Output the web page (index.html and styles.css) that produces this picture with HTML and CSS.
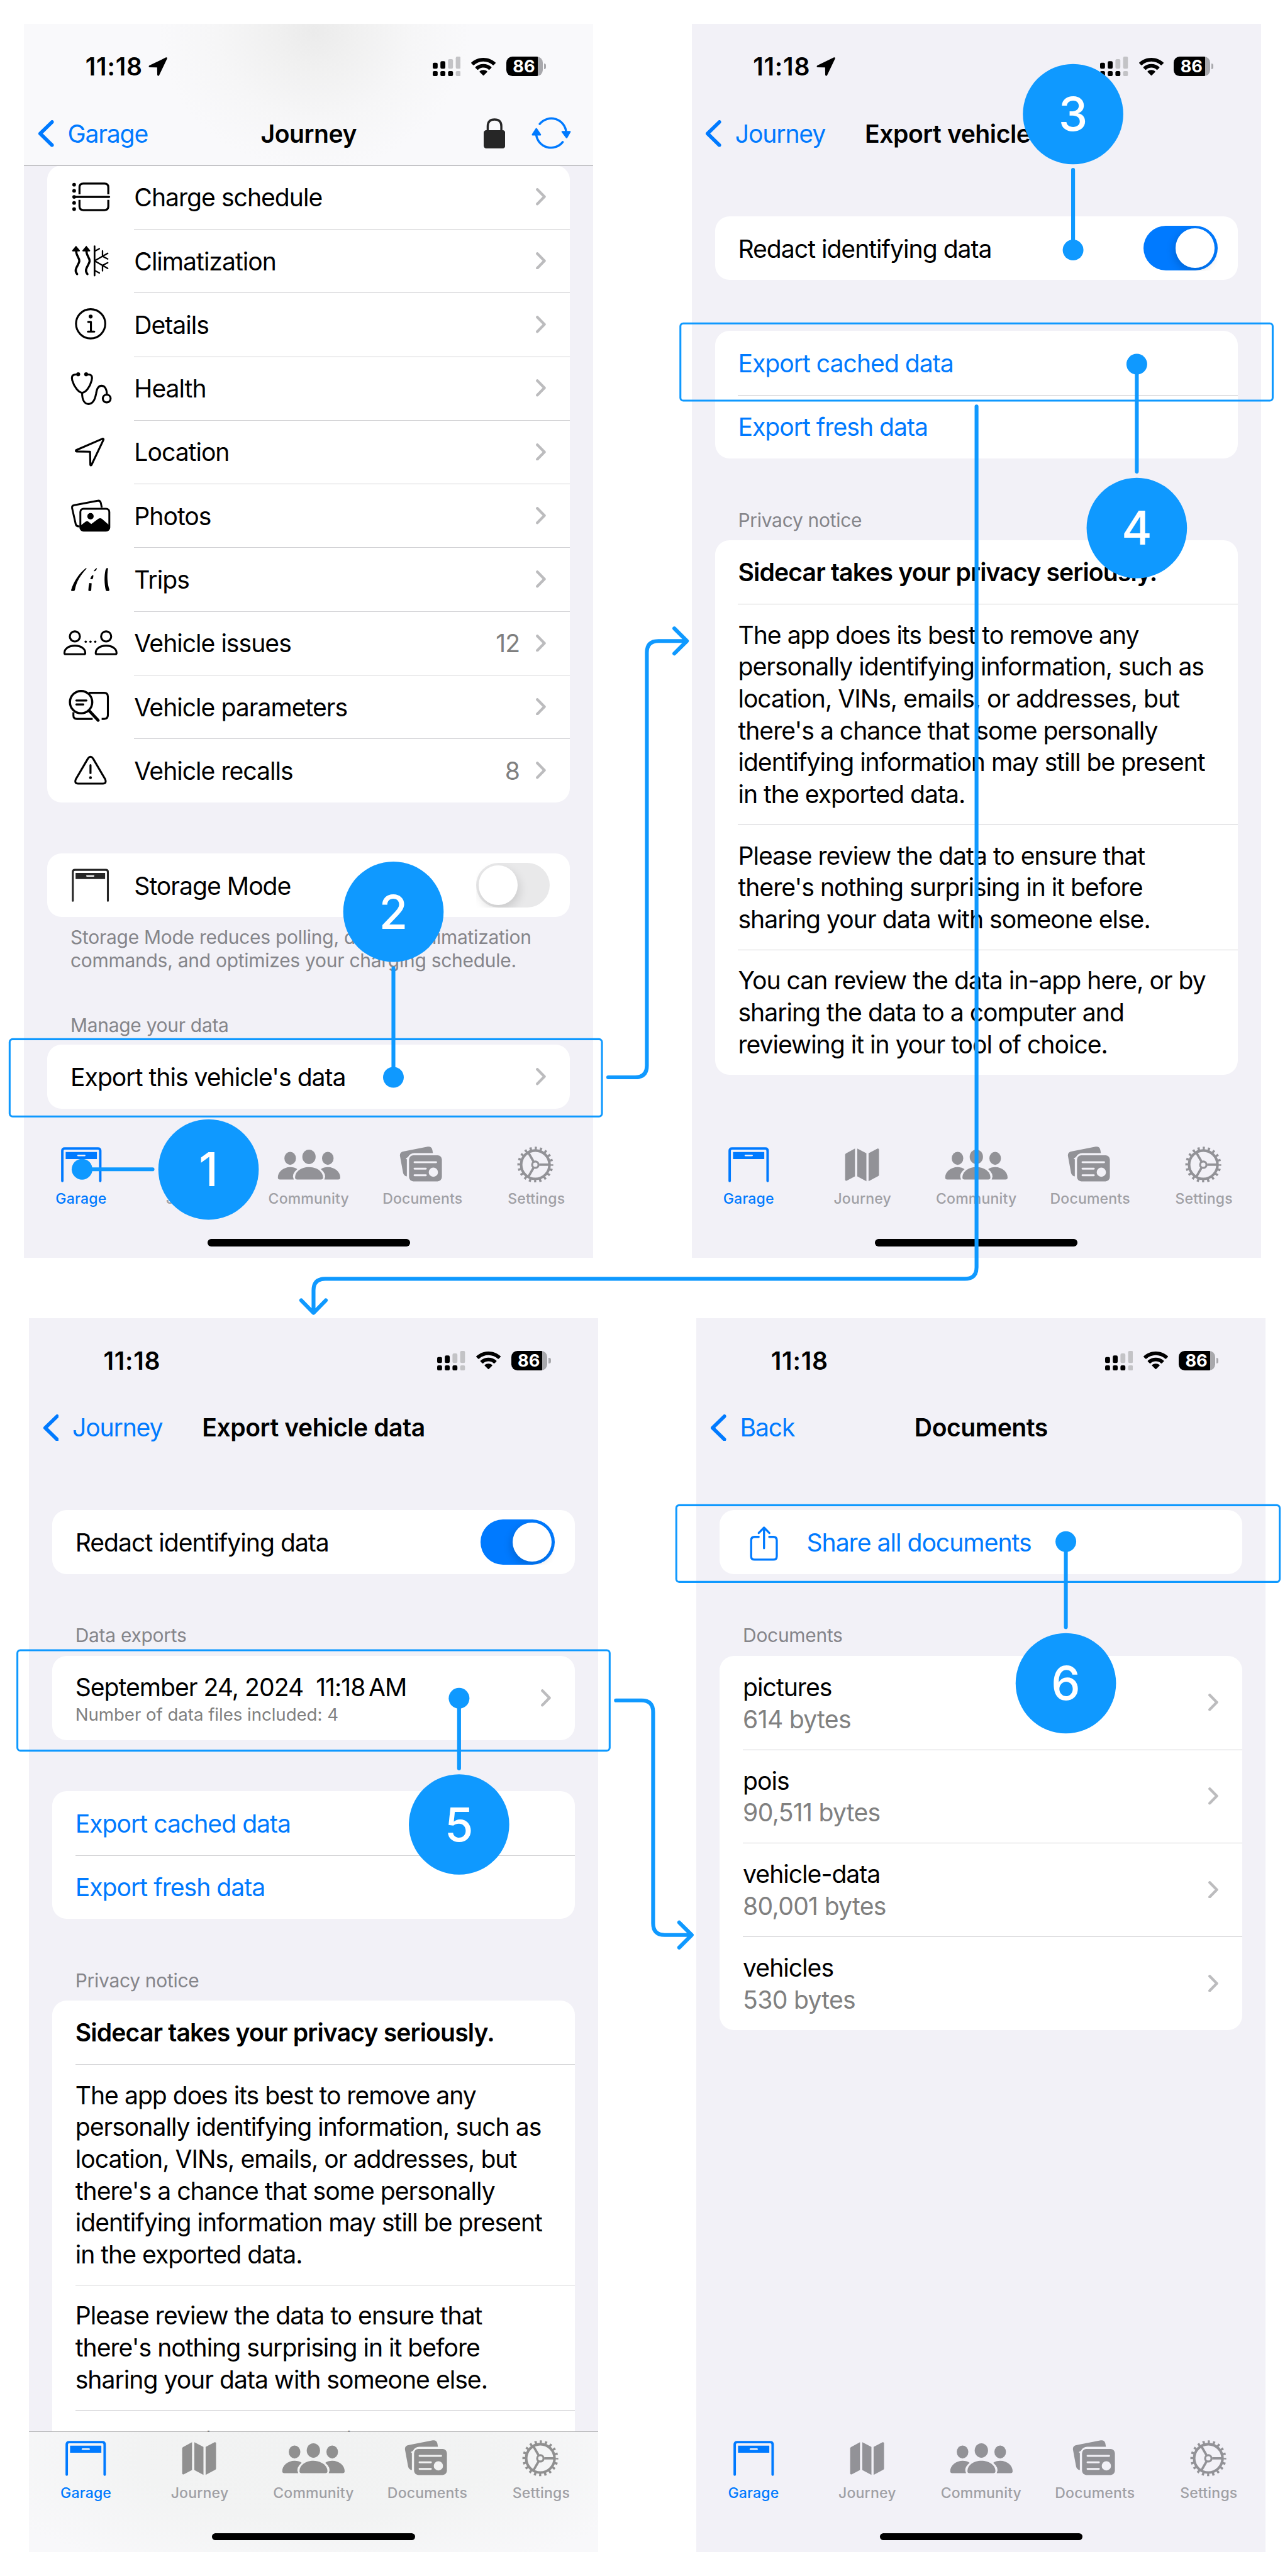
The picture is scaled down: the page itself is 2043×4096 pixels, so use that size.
FILE: index.html
```html
<!DOCTYPE html>
<html lang="en">
<head>
<meta charset="utf-8">
<title>Export vehicle data</title>
<link rel="stylesheet" href="styles.css">
</head>
<body>

<svg class="sprite" aria-hidden="true">
  <symbol id="arrow" viewBox="0 0 13 13"><path d="M12.1.15.7 5.7Q-.3 6.5.8 6.9L6 7.1 6.1 12.2Q6.5 13.4 7.4 12.5L12.9 1Q13.1-.2 12.1.15Z"/></symbol>
  <symbol id="signal" viewBox="0 0 19.4 13.6">
    <rect x="0" y="4.2" width="3.4" height="4.2" rx="1"/><rect x="5.3" y="3.2" width="3.4" height="5.2" rx="1"/>
    <rect x="0" y="10" width="3.4" height="3.5" rx="1"/><rect x="5.3" y="10" width="3.4" height="3.5" rx="1"/><rect x="10.6" y="10" width="3.4" height="3.5" rx="1"/>
    <g fill="#c3c3c6"><rect x="10.6" y="1.7" width="3.4" height="6.7" rx="1"/><rect x="15.9" y="0" width="3.4" height="8.4" rx="1"/><rect x="15.9" y="10" width="3.4" height="3.5" rx="1"/></g>
  </symbol>
  <symbol id="wifi" viewBox="0 0 17 12.4">
    <path d="M8.5 0C5.3 0 2.4 1.2.2 3.2Q-.1 3.5.2 3.8L1.4 5Q1.7 5.2 2 5C3.8 3.4 6 2.5 8.5 2.5S13.2 3.4 15 5Q15.3 5.2 15.6 5L16.8 3.8Q17.1 3.5 16.8 3.2C14.6 1.2 11.7 0 8.5 0Z"/>
    <path d="M8.5 4.2C6.400 4.200 4.500 5 3 6.300Q2.800 6.600 3 6.900L4.300 8.100Q4.600 8.300 4.900 8.100C5.900 7.200 7.100 6.700 8.500 6.700S11.100 7.200 12.100 8.100Q12.400 8.300 12.700 8.100L14 6.900Q14.200 6.600 14 6.300C12.500 5 10.600 4.200 8.500 4.200Z"/>
    <path d="M8.500 8.400C7.500 8.400 6.600 8.700 5.900 9.300Q5.700 9.600 5.900 9.800L8.200 12.100Q8.500 12.400 8.800 12.100L11.100 9.800Q11.300 9.600 11.100 9.300C10.400 8.700 9.500 8.400 8.500 8.400Z"/>
  </symbol>
  <symbol id="back" viewBox="0 0 11.200 18.600"><path d="M9.900 1.300 1.700 9.300 9.900 17.300" fill="none" stroke="currentColor" stroke-width="2.500" stroke-linecap="round" stroke-linejoin="round"/></symbol>
  <symbol id="next" viewBox="0 0 7 12"><path d="M1 1 5.900 6 1 11" fill="none" stroke="#bcbcbe" stroke-width="1.900" stroke-linecap="round" stroke-linejoin="round"/></symbol>

  <symbol id="i-charge" viewBox="0 0 44 30">
    <g fill="none" stroke="#000" stroke-width="1.400"><path d="M14.500 13V8.200Q14.500 5.600 17.100 5.600H31.800Q34.400 5.600 34.400 8.200V13M14.500 16.800V21.300Q14.500 23.900 17.100 23.900H31.800Q34.400 23.900 34.400 21.300V16.800"/><path d="M11 14.800H35" stroke-linecap="round"/></g>
    <circle cx="10.800" cy="6.400" r="1.250"/><circle cx="10.800" cy="10.600" r="1.250"/><circle cx="10.800" cy="14.800" r="1.250"/><circle cx="10.800" cy="19" r="1.250"/><circle cx="10.800" cy="23.200" r="1.250"/>
  </symbol>
  <symbol id="i-climate" viewBox="0 0 44 30">
    <g fill="none" stroke="#000" stroke-width="1.500" stroke-linecap="round">
      <path d="M12.200 8C12 11.500 14.500 12.800 14.400 15.300 14.200 18 10 20.800 12.900 24.300M19.300 8C19.100 11.500 21.600 12.800 21.500 15.300 21.300 18 17.100 20.800 20 24.300"/>
      <g stroke-width="1.200"><path d="M24.900 5V25.200"/><path d="M24.900 8.500 28.200 6.700M24.900 21.700 28.200 23.500M24.900 15.100 34 9.900M24.900 15.100 34 20.300M30.400 8.200V12L34 13.800M30.400 22V18.200L34 16.400" stroke-width="1"/></g>
    </g>
    <path d="M12.100 4.700 14.800 7.900Q14.900 8.600 14.200 8.600H10Q9.300 8.600 9.400 7.900ZM19.200 4.700 21.900 7.900Q22 8.600 21.300 8.600H17.100Q16.400 8.600 16.500 7.900Z"/>
  </symbol>
  <symbol id="i-info" viewBox="0 0 44 30">
    <g fill="none" stroke="#000" stroke-width="1.350" stroke-linecap="round" stroke-linejoin="round"><circle cx="22.200" cy="14.700" r="10.100"/><path d="M20.500 13.400H22.400V20M20.300 20.100H24.700"/></g>
    <circle cx="22.200" cy="9.700" r="1.350"/>
  </symbol>
  <symbol id="i-health" viewBox="0 0 44 30">
    <g fill="none" stroke="#000" stroke-width="1.350"><path d="M12.800 5.400H11.500C9.300 5.600 8.900 7.300 9.500 9.500 10.800 14 14 18 16.300 18 18.800 18 21.800 14 22.900 9.500 23.500 7.300 23.200 5.600 21 5.400H19.500"/><path d="M16.300 18C16.300 23 18 25.800 20.800 25.800 23.800 25.800 25.200 23 26 18.500 26.500 15 27.600 13.200 29.700 13.200 32 13.200 33.300 15.500 33.400 19"/><circle cx="33.300" cy="22" r="2.700"/></g>
    <circle cx="13.600" cy="5.300" r="1.350"/><circle cx="19.100" cy="5.300" r="1.350"/>
  </symbol>
  <symbol id="i-location" viewBox="0 0 44 30"><path d="M30.400 5.900 12.200 13.800Q11.700 14.500 12.400 14.700L21.800 14.900 22 24Q22.300 24.600 22.800 24L31.100 6.600Q31.200 5.700 30.400 5.900Z" fill="none" stroke="#000" stroke-width="1.350" stroke-linejoin="round"/></symbol>
  <symbol id="i-photos" viewBox="0 0 44 30">
    <path d="M14.600 22.500Q12.300 22.800 11.900 21L9.400 10Q9.100 8.200 10.900 7.900L27 4.900Q28.700 4.500 29.200 6.300L29.900 9.600" fill="none" stroke="#000" stroke-width="1.300"/>
    <rect x="15.100" y="10.400" width="20" height="15.100" rx="2.200" fill="#fff" stroke="#000" stroke-width="1.300"/>
    <circle cx="22.100" cy="15.600" r="2.200"/><path d="M15.200 22 18.700 19.300Q19.800 18.600 20.800 19.400L22.600 21 27.600 17.300Q28.800 16.600 30 17.400L35 21.700V23.500Q35 25.500 33 25.500H17.200Q15.200 25.500 15.200 23.500Z"/>
  </symbol>
  <symbol id="i-trips" viewBox="0 0 44 30"><path d="M18.800 7.200C14 11 10.400 16.500 8.700 22.300Q8.600 22.900 9.200 22.900H10.500Q11.100 22.900 11.300 22.300C12.300 16.500 15.200 12 19.400 7.400Q19.300 6.900 18.800 7.200ZM26 7.300Q24.900 8 24.300 9.200 25.300 9.400 25.800 8.700L26.600 7.500Q26.600 7 26 7.300ZM23.400 11.900Q22.300 12.800 21.900 14.800H23.500Q24.200 13.500 24.100 12.100ZM21.300 17.400Q20.700 19.500 20.600 22.500L21 22.900H22.200L22.600 22.500 22.900 17.600ZM33.800 7Q33 6.900 32.500 8.200C31.500 12.500 31.600 18 32.700 22.500L33.200 22.900H34.700L35.200 22.300C33.700 17.500 33.400 12.500 34.200 7.500Z"/></symbol>
  <symbol id="i-issues" viewBox="0 0 44 30">
    <g fill="none" stroke="#000" stroke-width="1.350"><circle cx="11.300" cy="10.400" r="3.500"/><circle cx="32.900" cy="10.400" r="3.500"/><path d="M4.100 21.800C4.100 18.900 7 16.800 11.300 16.800S18.500 18.900 18.500 21.800Q18.500 22.700 17.600 22.700H5Q4.100 22.700 4.100 21.800ZM25.700 21.800C25.700 18.900 28.600 16.800 32.900 16.800S40.100 18.900 40.100 21.800Q40.100 22.700 39.200 22.700H26.600Q25.700 22.700 25.700 21.800Z"/></g>
    <circle cx="18.800" cy="14" r=".8"/><circle cx="22.100" cy="14" r=".8"/><circle cx="25.400" cy="14" r=".8"/>
  </symbol>
  <symbol id="i-params" viewBox="0 0 44 30">
    <g fill="none" stroke="#000" stroke-width="1.350" stroke-linecap="round"><path d="M21 5.500H31.500Q34.100 5.500 34.100 8.100V20.900Q34.100 23.500 31.500 23.500H29.800M23.600 23.500H12.700Q10.300 23.500 10.300 21.200V18.900" stroke-linecap="butt"/><circle cx="15.600" cy="11.900" r="7.700" stroke-width="1.500"/><path d="M12.300 10.800H19.300M12.300 13.500H17.200"/><path d="M21.400 18.100 27.400 24.500" stroke-width="2"/></g>
  </symbol>
  <symbol id="i-warn" viewBox="0 0 44 30">
    <path d="M20.400 6.900 11.900 21.400Q10.800 24.200 13.500 24.300H30.700Q33.400 24.200 32.300 21.400L23.800 6.900Q22.100 4.600 20.400 6.900Z" fill="none" stroke="#000" stroke-width="1.350" stroke-linejoin="round"/>
    <path d="M22.100 11.600V17" stroke="#000" stroke-width="1.400" stroke-linecap="round"/><circle cx="22.100" cy="20.200" r=".95"/>
  </symbol>
  <symbol id="i-storage" viewBox="0 0 44 30">
    <path d="M9.900 25.700V5.800Q9.900 4.400 11.300 4.400H32.700Q34.100 4.400 34.100 5.800V25.700" fill="none" stroke="#262626" stroke-width="1.350" stroke-linecap="round"/>
    <path d="M11.800 6.500H32.200V10.800H11.800Z" fill="#262626"/><path d="M19.600 8.600H24.300" stroke="#fff" stroke-width="1" stroke-linecap="round"/>
  </symbol>
  <symbol id="i-share" viewBox="0 0 44 30"><path d="M19.200 11.200H16.400Q14 11.200 14 13.600V24.500Q14 26.900 16.400 26.900H29.300Q31.700 26.900 31.700 24.500V13.600Q31.700 11.200 29.300 11.200H26.500M22.900 19V5.200M19.200 8.500 22.900 4.800 26.600 8.500" fill="none" stroke="#007aff" stroke-width="1.450" stroke-linecap="round" stroke-linejoin="round"/></symbol>

  <symbol id="t-garage" viewBox="0 0 48 28">
    <path d="M10.900 26.800V6Q10.900 4.400 12.500 4.400H35.500Q37.100 4.400 37.100 6V26.800" fill="none" stroke="currentColor" stroke-width="1.700" stroke-linecap="round"/>
    <path d="M13.200 6.800H34.800V11.700H13.200Z" fill="currentColor"/><path d="M21.800 9.200H26.300" stroke="var(--bar)" stroke-width="1.100" stroke-linecap="round"/>
  </symbol>
  <symbol id="t-journey" viewBox="0 0 48 28"><g fill="currentColor"><path d="M12.600 7.800 18.800 4.400V23.700L13 26.700Q12 26.900 12 26V8.800Q12 8.200 12.600 7.800Z"/><path d="M20.400 4.400 26.700 7.700V27L20.400 23.700Z"/><path d="M28.200 7.700 34.400 4.500Q35.400 4.300 35.400 5.300V22.600Q35.400 23.200 34.900 23.500L28.200 27Z"/></g></symbol>
  <symbol id="t-community" viewBox="0 0 48 28"><g fill="currentColor">
    <ellipse cx="24" cy="10.200" rx="4.600" ry="5"/><path d="M14.400 24.400C14.400 20.500 18.500 17.300 24 17.300S33.700 20.500 33.700 24.400Q33.700 25.800 32.300 25.800H15.800Q14.400 25.800 14.400 24.400Z"/>
    <ellipse cx="37" cy="11.200" rx="4" ry="4.500"/><path d="M32.200 18.700Q34.200 17.300 37 17.300C42 17.300 45.600 20.800 45.600 24.400Q45.600 25.800 44.200 25.800H34.600Q36.600 22.400 32.200 18.700Z"/>
    <ellipse cx="11" cy="11.200" rx="4" ry="4.500"/><path d="M15.900 18.700Q13.900 17.300 11.100 17.300C6.100 17.300 2.500 20.800 2.500 24.400Q2.500 25.800 3.900 25.800H13.500Q11.500 22.400 15.900 18.700Z"/>
  </g></symbol>
  <symbol id="t-documents" viewBox="0 0 48 28">
    <path d="M11.300 6.400 27.800 3.200Q30.400 2.800 31 5.300L31.400 7.600H18.500Q15.500 7.700 14.200 10.300L12.600 11.300 13.400 12V23.700Q11.300 23.400 10.800 21.300L8.600 9.300Q8.400 6.900 11.300 6.400Z" fill="currentColor"/>
    <rect x="14.900" y="9.100" width="22.700" height="18" rx="3" fill="currentColor"/>
    <path d="M18.700 13.900H33.600M18.700 18.400H26.500M18.700 22.900H26.500" stroke="var(--bar)" stroke-width="1.300" stroke-linecap="round"/><circle cx="31.700" cy="20.800" r="3.200" fill="var(--bar)"/>
  </symbol>
  <symbol id="t-settings" viewBox="0 0 48 28"><g fill="none" stroke="currentColor">
    <circle cx="23.500" cy="15.600" r="9.800" stroke-width="1.800"/><circle cx="23.500" cy="15.600" r="11.400" stroke-width="2" stroke-dasharray="1.500 2.081" stroke-dashoffset=".75"/>
    <circle cx="23.500" cy="15.600" r="2.200" stroke-width="1.400"/><path d="M26.200 15.600H32.600M22.150 17.940 18.950 23.480M22.150 13.260 18.950 7.720" stroke-width="1.600"/>
  </g></symbol>
</svg>

<main class="board">
  <div class="pair">

    <section class="phone">
      <header class="top blurred">
        <div class="status">
          <div class="clock">11:18<svg class="loc"><use href="#arrow"/></svg></div>
          <div class="radios"><svg class="signal"><use href="#signal"/></svg><svg class="wifi"><use href="#wifi"/></svg><span class="battery"><b>86</b></span></div>
        </div>
        <nav class="nav">
          <a class="back"><svg><use href="#back"/></svg>Garage</a>
          <h1>Journey</h1>
          <div class="actions">
            <svg class="lock" viewBox="0 0 15 21"><path d="M2.800 9.500V5.600Q2.800.9 7.500.9T12.200 5.600V9.500" fill="none" stroke="#262626" stroke-width="1.500"/><rect x="0" y="8.300" width="14.900" height="12.500" rx="1.800" fill="#262626"/></svg>
            <svg class="sync" viewBox="0 0 28 24"><g fill="none" stroke="#007aff" stroke-width="1.500" stroke-linecap="round"><path d="M6.100 5.700A10.300 10.300 0 0 1 24.400 11.500M22 18.200A10.300 10.300 0 0 1 3.700 13"/></g><path d="M21.600 10.500H27Q27.800 10.500 27.500 11.300L25.200 15.300Q24.700 15.900 24.200 15.300L21.200 11.300Q21 10.600 21.600 10.500ZM1.200 13.700H6.600Q7.300 13.600 7 12.800L4.300 8.800Q3.800 8.200 3.300 8.800L.7 12.800Q.4 13.600 1.200 13.700Z" fill="#007aff"/></svg>
          </div>
        </nav>
      </header>
      <div class="body tucked">
        <ul class="card icons">
          <li><svg><use href="#i-charge"/></svg><span>Charge schedule</span><svg class="next"><use href="#next"/></svg></li>
          <li><svg><use href="#i-climate"/></svg><span>Climatization</span><svg class="next"><use href="#next"/></svg></li>
          <li><svg><use href="#i-info"/></svg><span>Details</span><svg class="next"><use href="#next"/></svg></li>
          <li><svg><use href="#i-health"/></svg><span>Health</span><svg class="next"><use href="#next"/></svg></li>
          <li><svg><use href="#i-location"/></svg><span>Location</span><svg class="next"><use href="#next"/></svg></li>
          <li><svg><use href="#i-photos"/></svg><span>Photos</span><svg class="next"><use href="#next"/></svg></li>
          <li><svg><use href="#i-trips"/></svg><span>Trips</span><svg class="next"><use href="#next"/></svg></li>
          <li><svg><use href="#i-issues"/></svg><span>Vehicle issues</span><em>12</em><svg class="next"><use href="#next"/></svg></li>
          <li><svg><use href="#i-params"/></svg><span>Vehicle parameters</span><svg class="next"><use href="#next"/></svg></li>
          <li><svg><use href="#i-warn"/></svg><span>Vehicle recalls</span><em>8</em><svg class="next"><use href="#next"/></svg></li>
        </ul>
        <ul class="card icons spaced">
          <li><svg><use href="#i-storage"/></svg><span>Storage Mode</span><i class="toggle"></i></li>
        </ul>
        <p class="footnote">Storage Mode reduces polling, disables climatization<br>commands, and optimizes your charging schedule.</p>
        <h2 class="after-note">Manage your data</h2>
        <ul class="card"><li><span>Export this vehicle's data</span><svg class="next"><use href="#next"/></svg></li></ul>
      </div>
      <footer class="tabs">
        <a class="on"><svg><use href="#t-garage"/></svg>Garage</a><a><svg><use href="#t-journey"/></svg>Journey</a><a><svg><use href="#t-community"/></svg>Community</a><a><svg><use href="#t-documents"/></svg>Documents</a><a><svg><use href="#t-settings"/></svg>Settings</a>
      </footer>
    </section>

    <section class="phone">
      <header class="top">
        <div class="status">
          <div class="clock">11:18<svg class="loc"><use href="#arrow"/></svg></div>
          <div class="radios"><svg class="signal"><use href="#signal"/></svg><svg class="wifi"><use href="#wifi"/></svg><span class="battery"><b>86</b></span></div>
        </div>
        <nav class="nav"><a class="back"><svg><use href="#back"/></svg>Journey</a><h1>Export vehicle data</h1></nav>
      </header>
      <div class="body">
        <ul class="card"><li><span>Redact identifying data</span><i class="toggle checked"></i></li></ul>
        <ul class="card links spaced"><li><span>Export cached data</span></li><li><span>Export fresh data</span></li></ul>
        <h2>Privacy notice</h2>
        <ul class="card prose">
          <li><strong>Sidecar takes your privacy seriously.</strong></li>
          <li>The app does its best to remove any<br>personally identifying information, such as<br>location, VINs, emails, or addresses, but<br>there's a chance that some personally<br>identifying information may still be present<br>in the exported data.</li>
          <li>Please review the data to ensure that<br>there's nothing surprising in it before<br>sharing your data with someone else.</li>
          <li>You can review the data in-app here, or by<br>sharing the data to a computer and<br>reviewing it in your tool of choice.</li>
        </ul>
      </div>
      <footer class="tabs">
        <a class="on"><svg><use href="#t-garage"/></svg>Garage</a><a><svg><use href="#t-journey"/></svg>Journey</a><a><svg><use href="#t-community"/></svg>Community</a><a><svg><use href="#t-documents"/></svg>Documents</a><a><svg><use href="#t-settings"/></svg>Settings</a>
      </footer>
    </section>
  </div>

  <div class="pair shifted">
    <section class="phone">
      <header class="top">
        <div class="status">
          <div class="clock alone">11:18</div>
          <div class="radios"><svg class="signal"><use href="#signal"/></svg><svg class="wifi"><use href="#wifi"/></svg><span class="battery"><b>86</b></span></div>
        </div>
        <nav class="nav"><a class="back"><svg><use href="#back"/></svg>Journey</a><h1>Export vehicle data</h1></nav>
      </header>
      <div class="body">
        <ul class="card"><li><span>Redact identifying data</span><i class="toggle checked"></i></li></ul>
        <h2>Data exports</h2>
        <ul class="card"><li class="export"><div><p>September 24, 2024&nbsp; 11:18<small> </small>AM</p><p class="caption">Number of data files included: 4</p></div><svg class="next"><use href="#next"/></svg></li></ul>
        <ul class="card links spaced"><li><span>Export cached data</span></li><li><span>Export fresh data</span></li></ul>
        <h2>Privacy notice</h2>
        <ul class="card prose">
          <li><strong>Sidecar takes your privacy seriously.</strong></li>
          <li>The app does its best to remove any<br>personally identifying information, such as<br>location, VINs, emails, or addresses, but<br>there's a chance that some personally<br>identifying information may still be present<br>in the exported data.</li>
          <li>Please review the data to ensure that<br>there's nothing surprising in it before<br>sharing your data with someone else.</li>
          <li>You can review the data in-app here, or by<br>sharing the data to a computer and<br>reviewing it in your tool of choice.</li>
        </ul>
      </div>
      <footer class="tabs frosted">
        <a class="on"><svg><use href="#t-garage"/></svg>Garage</a><a><svg><use href="#t-journey"/></svg>Journey</a><a><svg><use href="#t-community"/></svg>Community</a><a><svg><use href="#t-documents"/></svg>Documents</a><a><svg><use href="#t-settings"/></svg>Settings</a>
      </footer>
    </section>

    <section class="phone">
      <header class="top">
        <div class="status">
          <div class="clock alone">11:18</div>
          <div class="radios"><svg class="signal"><use href="#signal"/></svg><svg class="wifi"><use href="#wifi"/></svg><span class="battery"><b>86</b></span></div>
        </div>
        <nav class="nav"><a class="back"><svg><use href="#back"/></svg>Back</a><h1>Documents</h1></nav>
      </header>
      <div class="body">
        <ul class="card icons links"><li><svg><use href="#i-share"/></svg><span>Share all documents</span></li></ul>
        <h2>Documents</h2>
        <ul class="card files">
          <li><div><p>pictures</p><p class="size">614 bytes</p></div><svg class="next"><use href="#next"/></svg></li>
          <li><div><p>pois</p><p class="size">90,511 bytes</p></div><svg class="next"><use href="#next"/></svg></li>
          <li><div><p>vehicle-data</p><p class="size">80,001 bytes</p></div><svg class="next"><use href="#next"/></svg></li>
          <li><div><p>vehicles</p><p class="size">530 bytes</p></div><svg class="next"><use href="#next"/></svg></li>
        </ul>
      </div>
      <footer class="tabs">
        <a class="on"><svg><use href="#t-garage"/></svg>Garage</a><a><svg><use href="#t-journey"/></svg>Journey</a><a><svg><use href="#t-community"/></svg>Community</a><a><svg><use href="#t-documents"/></svg>Documents</a><a><svg><use href="#t-settings"/></svg>Settings</a>
      </footer>
    </section>
  </div>
</main>

<svg class="callouts" viewBox="0 0 2662 5337">
  <g class="frames">
    <rect x="20" y="2153" width="1227" height="160" rx="6"/>
    <rect x="1409.500" y="670" width="1227" height="160" rx="6"/>
    <rect x="36" y="3419" width="1227" height="208" rx="6"/>
    <rect x="1401" y="3118.500" width="1250" height="159" rx="6"/>
  </g>
  <g class="wires">
    <path d="M1260 2232H1316Q1340 2232 1340 2208V1352Q1340 1328 1364 1328H1422M1397 1302 1423 1328 1397 1354"/>
    <path d="M2023 842V2625.500Q2023 2649.500 1999 2649.500H673.500Q649.500 2649.500 649.500 2673.500V2719M624 2694 649.500 2720 675 2694"/>
    <path d="M1276 3523H1329Q1353 3523 1353 3547V3985Q1353 4009 1377 4009H1432M1407 3983 1433 4009 1407 4035"/>
    <path d="M170 2422.500H316M815 2006V2232M2223 352V518M2355 977V754.500M951 3663.500V3518.500M2208 3371V3194"/>
  </g>
  <g class="marks">
    <circle cx="170" cy="2422.500" r="21.500"/><circle cx="815" cy="2232" r="21.500"/><circle cx="2223" cy="518" r="21.500"/><circle cx="2355" cy="754.500" r="21.500"/><circle cx="951" cy="3518.500" r="21.500"/><circle cx="2208" cy="3194" r="21.500"/>
    <circle cx="432" cy="2423" r="104"/><circle cx="815" cy="1889" r="104"/><circle cx="2223" cy="236.500" r="104"/><circle cx="2355" cy="1094" r="104"/><circle cx="951" cy="3780" r="104"/><circle cx="2208" cy="3487.500" r="104"/>
  </g>
  <g class="digits">
    <text x="432" y="2458">1</text><text x="815" y="1924">2</text><text x="2223" y="271.500">3</text><text x="2355" y="1129">4</text><text x="951" y="3815">5</text><text x="2208" y="3522.500">6</text>
  </g>
</svg>
</body>
</html>
```
FILE: styles.css
```css
/* 1rem is ten points of the phone screens */
html {
  font-size: 23.0242px;
}

* {
  box-sizing: border-box;
  margin: 0;
  padding: 0;
}

body {
  position: relative;
  width: 2043px;
  height: 4096px;
  overflow: hidden;
  background: #fff;
  color: #000;
  font-family: Inter, "Liberation Sans", sans-serif;
}

ul {
  list-style: none;
}

svg {
  display: block;
  flex: none;
}

.sprite {
  position: absolute;
  width: 0;
  height: 0;
}

/* Screens */
.board {
  display: flex;
  flex-direction: column;
  gap: 4.1667rem;
  padding-top: 1.6667rem;
}

.pair {
  display: flex;
  gap: 6.8rem;
  padding-left: 1.6667rem;
}

.pair.shifted {
  padding-left: 2rem;
}

.phone {
  --bar: #f2f1f7;
  display: flex;
  flex: none;
  flex-direction: column;
  width: 39.3rem;
  height: 85.2rem;
  overflow: hidden;
  background: #f2f1f7;
}

/* Status bar and navigation bar */
.top {
  z-index: 1;
  flex: none;
  height: 9.8rem;
}

.top.blurred {
  border-bottom: 1px solid #a9a9ad;
  background: radial-gradient(ellipse 9rem 8rem at 51% 5%, #ebebeb 0%, #f0f0f0 30%, #f6f6f7 75%, #f9f9fb 120%);
}

.status {
  display: flex;
  align-items: center;
  justify-content: space-between;
  height: 5.4rem;
  padding: .46rem 3.28rem 0 4.23rem;
}

.clock {
  display: flex;
  align-items: center;
  gap: .42rem;
  font-size: 1.7rem;
  font-weight: 600;
  letter-spacing: .02em;
}

.clock.alone {
  padding-left: .91rem;
}

.loc {
  width: 1.3rem;
  height: 1.3rem;
}

.radios {
  display: flex;
  align-items: center;
}

.signal {
  width: 1.94rem;
  height: 1.36rem;
  margin-right: .73rem;
}

.wifi {
  width: 1.7rem;
  height: 1.24rem;
  margin-right: .73rem;
}

.battery {
  position: relative;
  display: grid;
  place-items: center;
  width: 2.5rem;
  height: 1.36rem;
  margin-right: .22rem;
  padding-right: .08rem;
  border-radius: .42rem;
  background: linear-gradient(90deg, #000 86%, #a8a8ac 86%);
  color: #fff;
  font-size: 1.18rem;
  line-height: 1.36rem;
}

.battery::after {
  content: "";
  position: absolute;
  top: .48rem;
  right: -.23rem;
  width: .14rem;
  height: .4rem;
  border-radius: 0 .14rem .14rem 0;
  background: #a8a8ac;
}

.nav {
  display: grid;
  grid-template-columns: 1fr auto 1fr;
  align-items: center;
  height: 4.32rem;
  padding: 0 1.52rem;
}

.nav h1 {
  grid-column: 2;
  font-size: 1.7rem;
  font-weight: 600;
  letter-spacing: -.0115em;
}

.back {
  display: flex;
  grid-column: 1;
  align-items: center;
  gap: .94rem;
  margin-left: -.58rem;
  color: #007aff;
  font-size: 1.7rem;
  letter-spacing: -.03em;
}

.back svg {
  width: 1.12rem;
  height: 1.86rem;
}

.actions {
  display: flex;
  align-items: center;
  justify-content: flex-end;
  gap: 1.75rem;
}

.lock {
  width: 1.5rem;
  height: 2.1rem;
}

.sync {
  width: 2.8rem;
  height: 2.4rem;
  margin-top: -.06rem;
}

/* Grouped lists */
.body {
  flex: 1;
  min-height: 0;
  padding: 3.47rem 1.6rem 0;
  overflow: hidden;
}

.body.tucked {
  margin-top: -.06rem;
  padding-top: 0;
}

.card {
  border-radius: 1rem;
  background: #fff;
  font-size: 1.7rem;
  letter-spacing: -.0255em;
}

.card.spaced {
  margin-top: 3.53rem;
}

.card li {
  display: flex;
  align-items: center;
  height: 4.4rem;
  margin-left: 1.6rem;
  padding-right: 1.67rem;
  line-height: 2.2rem;
  white-space: nowrap;
}

.card li + li {
  box-shadow: inset 0 1px #d0d0d3;
}

.card li > span,
.card li > div {
  flex: 1;
  padding-top: .12rem;
}

.card.icons li {
  margin-left: 6rem;
}

.card.icons li > svg:first-child {
  width: 4.4rem;
  height: 3rem;
  margin-right: .81rem;
  margin-left: -5.21rem;
}

.card em {
  margin-right: 1.12rem;
  padding-top: .08rem;
  color: #7f7f7f;
  font-style: normal;
}

.card .next {
  width: .7rem;
  height: 1.2rem;
}

.card.links {
  color: #007aff;
}

.card.prose li {
  display: block;
  height: auto;
  padding: 1.06rem 0 .973rem;
}

.card.prose li:first-child {
  height: 4.4rem;
  padding: 1.14rem 0 1.06rem;
  letter-spacing: -.0215em;
}

.card.prose strong {
  font-weight: 600;
}

.card li.export {
  height: 5.83rem;
}

.export small {
  font-size: .6em;
  line-height: 0;
}

.caption {
  color: #808080;
  font-size: 1.2rem;
  letter-spacing: -.001em;
  line-height: 1.6rem;
}

.card.files li {
  height: 6.46rem;
}

.size {
  color: #808080;
  letter-spacing: -.018em;
}

.body h2 {
  padding: 3.46rem 0 .59rem 1.6rem;
  color: #85858a;
  font-size: 1.3rem;
  font-weight: 400;
  letter-spacing: -.009em;
  line-height: 1.6rem;
}

.body h2.after-note {
  padding-top: 2.86rem;
  padding-bottom: .55rem;
}

.footnote {
  padding: .62rem 0 0 1.6rem;
  color: #85858a;
  font-size: 1.3rem;
  letter-spacing: -.008em;
  line-height: 1.6rem;
  white-space: nowrap;
}

.toggle {
  display: flex;
  align-items: center;
  width: 5.1rem;
  height: 3.1rem;
  margin-right: -.27rem;
  padding: .2rem;
  border-radius: 1.55rem;
  background: #e9e9ea;
}

.toggle::before {
  content: "";
  width: 2.7rem;
  height: 2.7rem;
  border-radius: 50%;
  background: #fff;
  box-shadow: .1rem .3rem .7rem rgba(0, 0, 0, .14);
  clip-path: inset(-.2rem -1rem -.2rem -.2rem);
}

.toggle.checked {
  justify-content: flex-end;
  background: #007aff;
}

.toggle.checked::before {
  box-shadow: -.1rem .2rem .6rem rgba(0, 0, 0, .16);
  clip-path: inset(-.2rem -.2rem -.2rem -1rem);
}

/* Tab bar with the home indicator */
.tabs {
  position: relative;
  display: grid;
  grid-template-columns: repeat(5, 1fr);
  flex: none;
  align-content: start;
  height: 8.34rem;
  padding-top: .34rem;
  color: #929297;
}

.tabs a {
  display: flex;
  align-items: center;
  flex-direction: column;
  color: #a0a0a5;
  font-size: 1rem;
  font-weight: 500;
  letter-spacing: .008em;
  line-height: 1.2rem;
}

.tabs svg {
  width: 4.8rem;
  height: 2.8rem;
  margin-bottom: .55rem;
  color: #929297;
}

.tabs .on,
.tabs .on svg {
  color: #007aff;
}

.tabs::after {
  content: "";
  position: absolute;
  bottom: .8rem;
  left: 12.65rem;
  width: 14rem;
  height: .5rem;
  border-radius: .25rem;
  background: #000;
}

.tabs.frosted {
  --bar: #f2f3f3;
  background: radial-gradient(ellipse 24rem 9rem at 50% 20%, #f1f2f2 0%, #f2f3f3 50%, #f8f8fa 100%);
  box-shadow: inset 0 1px #b0b0b2;
}

.tabs.frosted svg {
  color: #909090;
}

.tabs.frosted .on svg {
  color: #007aff;
}

/* Numbered callouts drawn over the screens */
.callouts {
  position: absolute;
  z-index: 2;
  top: 0;
  left: 0;
  width: 2043px;
  height: 4096px;
}

.frames {
  fill: none;
  stroke: #0f99ff;
  stroke-width: 4;
}

.wires {
  fill: none;
  stroke: #0f99ff;
  stroke-width: 8;
  stroke-linecap: round;
  stroke-linejoin: round;
}

.marks {
  fill: #0f99ff;
}

.digits {
  fill: #fff;
  font-family: Inter, sans-serif;
  font-size: 96px;
  font-weight: 500;
  text-anchor: middle;
}
```
